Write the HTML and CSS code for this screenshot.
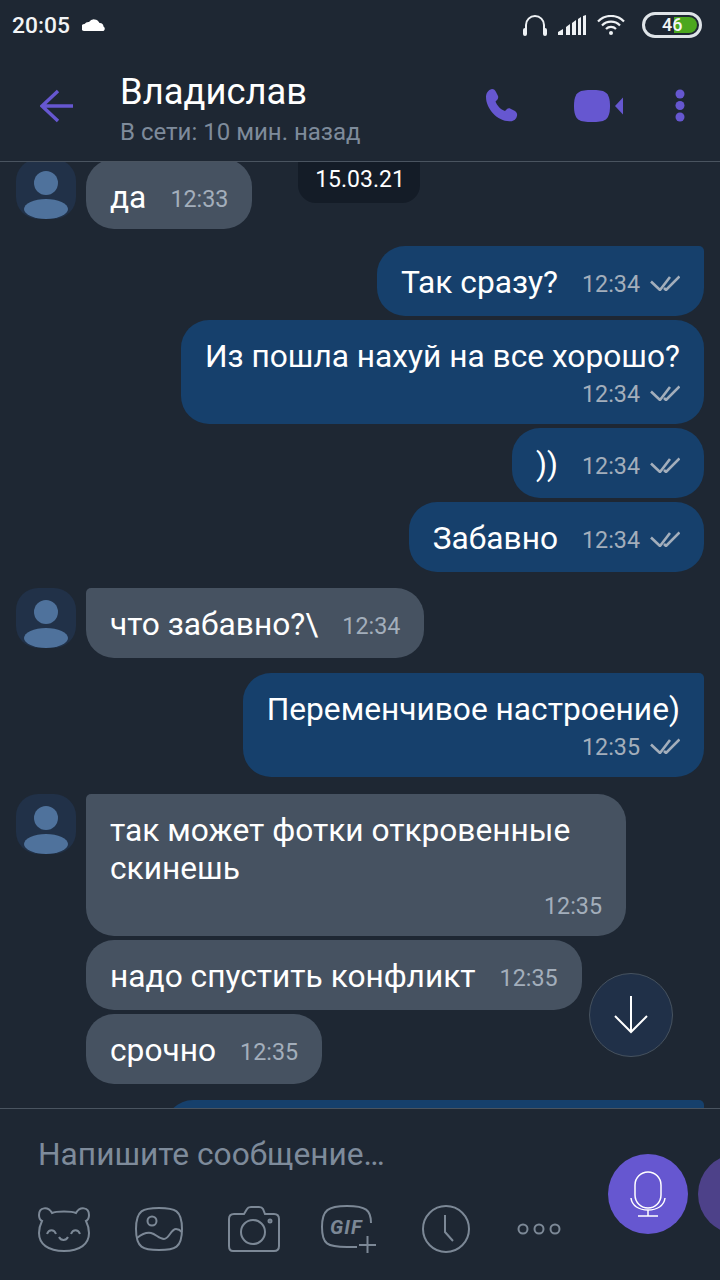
FILE: index.html
```html
<!DOCTYPE html>
<html>

<head>
  <meta charset='utf-8'>
  <title>Владислав</title>
  <meta name='viewport' content='width=device-width, initial-scale=1'>
  <link rel="stylesheet" href="styles.css">
</head>

<body>
  <svg class="sprite" width="0" height="0">
    <symbol id="ticks" viewBox="0 0 30 16">
      <path d="M1 6.500l9 8.500L20 2M14 13l2 2L29.500 1.500" fill="none" stroke="currentColor" stroke-width="2.600" />
    </symbol>
    <symbol id="person" viewBox="0 0 60 60">
      <circle cx="30" cy="24" r="12" fill="#4f729c" />
      <ellipse cx="30" cy="50" rx="22" ry="10" fill="#4f729c" />
    </symbol>
  </svg>

  <div class="status-bar">
    <span class="clock">20:05</span>
    <svg class="cloud" width="24" height="14" viewBox="0 0 24 14">
      <path d="M3 14a3.500 3.500 0 0 1-.500-7A5 5 0 0 1 7 5a6 6 0 0 1 10.500 1 3.800 3.800 0 0 1 4 3.500A2.600 2.600 0 0 1 21.500 14z" fill="#fff" />
    </svg>
    <div class="status-icons">
      <svg width="24" height="22" viewBox="0 0 24 22">
        <path d="M3 19V11a9 9 0 0 1 18 0v8" fill="none" stroke="#eef1f4" stroke-width="2" />
        <rect x="0" y="14" width="4" height="8" rx="2" fill="#eef1f4" />
        <rect x="20" y="14" width="4" height="8" rx="2" fill="#eef1f4" />
      </svg>
      <svg width="28" height="20" viewBox="0 0 28 20">
        <path d="M0 20v-3l5-3v6zM8 20v-8l4-3v11zM14 20V8l4-3v15zM20 20V4l3-2v18zM25 20V1l3-1v20z" fill="#eef1f4" />
      </svg>
      <svg width="28" height="20" viewBox="0 0 28 20">
        <path d="M1 6.500a18 18 0 0 1 26 0M5 10.500a12.500 12.500 0 0 1 18 0M9 14a7 7 0 0 1 10 0" fill="none" stroke="#eef1f4" stroke-width="2.200" />
        <circle cx="14" cy="18" r="2" fill="#eef1f4" />
      </svg>
      <div class="battery">
        <div class="battery-fill"></div>
        <span class="battery-level">46</span>
      </div>
    </div>
  </div>

  <header class="chat-header">
    <svg class="back" width="34" height="34" viewBox="0 0 34 34">
      <path d="M33 17H2M18 2L2 17l16 15" fill="none" stroke="#6657d0" stroke-width="3.400" />
    </svg>
    <div class="contact">
      <div class="contact-name">Владислав</div>
      <div class="contact-seen">В сети: 10 мин. назад</div>
    </div>
    <svg class="phone" width="32" height="33" viewBox="0 0 32 33">
      <path d="M6 0c2 0 3 1 4 3l2 4c.500 1.500 0 3-1 4l-1.500 1.500c1.500 4 5 8 9.500 9.500l1.500-1.500c1-1 2.500-1.500 4-.800l4 2c2 1 3 3 2.500 5-.500 3-3 5.500-6.500 5.500C12 33 0 20 0 8c0-4 2-7 6-8z" fill="#6657d0" />
    </svg>
    <svg class="video" width="50" height="32" viewBox="0 0 50 32">
      <path d="M18 0C30 0 36 1 36 16S30 32 18 32 0 31 0 16 6 0 18 0z" fill="#6657d0" />
      <path d="M41 16l8-8.500v17z" fill="#6657d0" />
    </svg>
    <svg class="dots" width="10" height="33" viewBox="0 0 10 33">
      <circle cx="5" cy="5" r="4.500" fill="#6657d0" />
      <circle cx="5" cy="16.500" r="4.500" fill="#6657d0" />
      <circle cx="5" cy="28" r="4.500" fill="#6657d0" />
    </svg>
  </header>

  <main class="messages">
    <div class="row row-in clipped-top">
      <svg class="avatar" width="60" height="60"><use href="#person" /></svg>
      <div class="bubble in">
        <span class="text">да</span><span class="time">12:33</span>
      </div>
    </div>

    <div class="row row-out gap-top-lg">
      <div class="bubble out first">
        <span class="text">Так сразу?</span><span class="time">12:34</span>
        <svg class="tick" width="30" height="16"><use href="#ticks" /></svg>
      </div>
    </div>
    <div class="row row-out">
      <div class="bubble out stacked">
        <span class="text">Из пошла нахуй на все хорошо?</span>
        <div class="meta"><span class="time">12:34</span><svg class="tick" width="30" height="16"><use href="#ticks" /></svg></div>
      </div>
    </div>
    <div class="row row-out">
      <div class="bubble out">
        <span class="text">))</span><span class="time">12:34</span>
        <svg class="tick" width="30" height="16"><use href="#ticks" /></svg>
      </div>
    </div>
    <div class="row row-out">
      <div class="bubble out">
        <span class="text">Забавно</span><span class="time">12:34</span>
        <svg class="tick" width="30" height="16"><use href="#ticks" /></svg>
      </div>
    </div>

    <div class="row row-in gap-top">
      <svg class="avatar" width="60" height="60"><use href="#person" /></svg>
      <div class="bubble in first">
        <span class="text">что забавно?\</span><span class="time">12:34</span>
      </div>
    </div>

    <div class="row row-out gap-top-sm">
      <div class="bubble out first stacked">
        <span class="text">Переменчивое настроение)</span>
        <div class="meta"><span class="time">12:35</span><svg class="tick" width="30" height="16"><use href="#ticks" /></svg></div>
      </div>
    </div>

    <div class="row row-in gap-top-lg">
      <svg class="avatar" width="60" height="60"><use href="#person" /></svg>
      <div class="bubble in first stacked wide">
        <span class="text">так может фотки откровенные скинешь</span>
        <div class="meta"><span class="time">12:35</span></div>
      </div>
    </div>
    <div class="row row-in no-avatar">
      <div class="bubble in">
        <span class="text">надо спустить конфликт</span><span class="time">12:35</span>
      </div>
    </div>
    <div class="row row-in no-avatar">
      <div class="bubble in">
        <span class="text">срочно</span><span class="time">12:35</span>
      </div>
    </div>

    <div class="row row-out gap-top">
      <div class="bubble out first tail-bubble"></div>
    </div>

    <div class="date-badge">15.03.21</div>
    <div class="scroll-down">
      <svg width="36" height="38" viewBox="0 0 36 38">
        <path d="M18 0v36M2 20l16 16 16-16" fill="none" stroke="#fff" stroke-width="2" />
      </svg>
    </div>
  </main>

  <footer class="composer">
    <div class="placeholder">Напишите сообщение…</div>
    <div class="tools">
      <svg width="52" height="46" viewBox="0 0 52 46" class="tool">
        <path d="M14 7C10 0 1 1 1 9c0 3 1 5 3 6-2 4-3 8-3 12 0 11 9 18 25 18s25-7 25-18c0-4-1-8-3-12 2-1 3-3 3-6 0-8-9-9-13-2-4-2-20-2-24 0z" />
        <path d="M9 28c2-5 7-5 9 0M33 28c2-5 7-5 9 0M21 31c2 4 7 4 9 0" />
      </svg>
      <svg width="48" height="44" viewBox="0 0 48 44" class="tool">
        <path d="M24 1c16 0 23 2 23 21s-7 21-23 21S1 41 1 22 8 1 24 1z" />
        <circle cx="17" cy="14" r="4.500" />
        <path d="M2 31c5-4 9-6 14-5s8 6 13 6 7-10 12-10c3 0 5 2 6 3" />
      </svg>
      <svg width="52" height="46" viewBox="0 0 52 46" class="tool">
        <path d="M6 8h10l3-5c1-2 2-2 4-2h8c2 0 3 0 4 2l2 5h9c3 0 5 2 5 5v27c0 3-2 5-5 5H5c-3 0-4-2-4-5V13c0-3 2-5 5-5z" />
        <circle cx="25" cy="26" r="12" />
        <circle cx="42" cy="15" r="1.500" />
      </svg>
      <svg width="56" height="48" viewBox="0 0 56 48" class="tool">
        <path d="M50 18C50 5 45 1 26 1S1 5 1 22s5 20 25 20h10" />
        <text x="9" y="29" class="gif-label">GIF</text>
        <path d="M38 40h17M46.500 31v17" />
      </svg>
      <svg width="48" height="48" viewBox="0 0 48 48" class="tool tool-clock">
        <circle cx="24" cy="24" r="23" />
        <path d="M23 10v17l8 9" />
      </svg>
      <svg width="44" height="12" viewBox="0 0 44 12" class="tool">
        <circle cx="6" cy="6" r="4.500" />
        <circle cx="22" cy="6" r="4.500" />
        <circle cx="38" cy="6" r="4.500" />
      </svg>
    </div>
    <div class="mic-button">
      <svg width="36" height="46" viewBox="0 0 36 46">
        <rect x="5" y="1" width="26" height="36" rx="13" fill="none" stroke="#fff" stroke-width="1.500" />
        <path d="M1 27c1 8 8 12 17 12s16-4 17-12M18 39v6M8 45h20" fill="none" stroke="#fff" stroke-width="1.500" />
      </svg>
    </div>
    <div class="send-peek"></div>
  </footer>
</body>

</html>
```
FILE: styles.css
```css
* {
  box-sizing: border-box;
  margin: 0;
  padding: 0;
  font-family: Roboto, "Noto Sans", sans-serif;
}

html,
body {
  height: 100%;
}

body {
  display: flex;
  flex-direction: column;
  height: 1280px;
  overflow: hidden;
  background-color: #1e2733;
  color: #fff;
}

.sprite {
  position: absolute;
}

/* status bar */

.status-bar {
  display: flex;
  align-items: center;
  flex-shrink: 0;
  height: 50px;
  padding: 0 18px 0 12px;
}

.clock {
  font-size: 22.800px;
  font-weight: 500;
  color: #f2f4f6;
}

.cloud {
  margin-left: 12px;
  margin-bottom: 2px;
}

.status-icons {
  display: flex;
  align-items: center;
  margin-left: auto;
}

.status-icons svg {
  margin-right: 11px;
}

.status-icons svg:first-child {
  margin-bottom: 1px;
}

.battery {
  position: relative;
  width: 60px;
  height: 26px;
  margin-left: 6px;
  border: 3px solid #dfe4e8;
  border-radius: 13px;
}

.battery-fill {
  position: absolute;
  top: 2px;
  right: 2px;
  width: 23px;
  height: 16px;
  background: #4ca71e;
  border-radius: 0 8px 8px 0;
}

.battery-level {
  position: absolute;
  top: -1px;
  left: 17px;
  font-size: 18px;
  font-weight: 500;
  line-height: 22px;
  color: #f2f4f6;
}

/* header */

.chat-header {
  display: flex;
  align-items: center;
  flex-shrink: 0;
  height: 112px;
  padding: 0 35px 0 40px;
  border-bottom: 1px solid #4a5460;
}

.back {
  flex-shrink: 0;
}

.contact {
  flex: 1;
  margin-left: 46px;
  padding-top: 6px;
}

.contact-name {
  font-size: 36.400px;
  line-height: 44px;
}

.contact-seen {
  margin-top: 3px;
  font-size: 24px;
  line-height: 30px;
  color: #7e8b9b;
}

.phone {
  margin-right: 56px;
}

.video {
  margin-right: 51px;
}

/* messages */

.messages {
  position: relative;
  flex: 1;
  min-height: 0;
  display: flex;
  flex-direction: column;
  gap: 4px;
  overflow: hidden;
  padding: 0 16px;
}

.row {
  display: flex;
  flex-shrink: 0;
}

.row-out {
  justify-content: flex-end;
}

.no-avatar {
  padding-left: 70px;
}

.clipped-top {
  margin-top: -3px;
}

.clipped-top .bubble {
  padding: 20px 24px 12px;
}

.gap-top {
  margin-top: 12px;
}

.gap-top-lg {
  margin-top: 13px;
}

.gap-top-sm {
  margin-top: 11px;
}

.avatar {
  flex-shrink: 0;
  margin-right: 10px;
  background: #213148;
  clip-path: inset(0 round 22px);
}

.bubble {
  display: flex;
  align-items: center;
  padding: 18px 24px 14px;
  border-radius: 28px;
  font-size: 31.700px;
  line-height: 38px;
}

.bubble.first {
  border-top-left-radius: 5px;
}

.bubble.out.first {
  border-top-left-radius: 28px;
  border-top-right-radius: 5px;
}

.in {
  background: #465261;
}

.out {
  background: #16406c;
}

.stacked {
  display: block;
}

.wide {
  width: 540px;
}

.tail-bubble {
  width: 539px;
  height: 70px;
}

.time {
  margin-left: 24px;
  padding-top: 2px;
  font-size: 23.300px;
  line-height: 32px;
  color: #a3aebb;
}

.tick {
  flex-shrink: 0;
  margin-left: 10px;
  color: #a3aebb;
}

.meta {
  display: flex;
  align-items: center;
  justify-content: flex-end;
  height: 34px;
}

/* overlays */

.date-badge {
  position: absolute;
  top: 0;
  left: 298px;
  width: 122px;
  height: 41px;
  padding-left: 2px;
  background: #141c27;
  border-radius: 0 0 18px 18px;
  font-size: 23px;
  line-height: 36px;
  text-align: center;
}

.scroll-down {
  position: absolute;
  top: 811px;
  left: 589px;
  display: flex;
  align-items: center;
  justify-content: center;
  width: 84px;
  height: 84px;
  background: #203048;
  border: 1px solid #46525f;
  border-radius: 100%;
}

/* composer */

.composer {
  position: relative;
  flex-shrink: 0;
  height: 172px;
  overflow: hidden;
  background: #1e2733;
  border-top: 1px solid #4a5460;
}

.placeholder {
  padding: 27px 0 0 38px;
  font-size: 31.700px;
  line-height: 38px;
  color: #7e8b9b;
}

.tools {
  display: grid;
  grid-template-columns: repeat(6, 95px);
  align-items: center;
  justify-items: center;
  height: 50px;
  margin-top: 30px;
  padding-left: 16px;
}

.tool {
  fill: none;
  stroke: #7c8896;
  stroke-width: 2;
}

.tool-clock {
  margin-left: 5px;
}

.gif-label {
  fill: #7c8896;
  stroke: none;
  font-size: 20px;
  font-weight: 700;
  font-style: italic;
  letter-spacing: 1px;
}

.mic-button {
  position: absolute;
  top: 45px;
  left: 608px;
  display: flex;
  align-items: center;
  justify-content: center;
  width: 80px;
  height: 80px;
  background: #6657d0;
  border-radius: 100%;
}

.send-peek {
  position: absolute;
  top: 45px;
  left: 698px;
  width: 80px;
  height: 80px;
  background: #4d4189;
  border-radius: 100%;
}
```
